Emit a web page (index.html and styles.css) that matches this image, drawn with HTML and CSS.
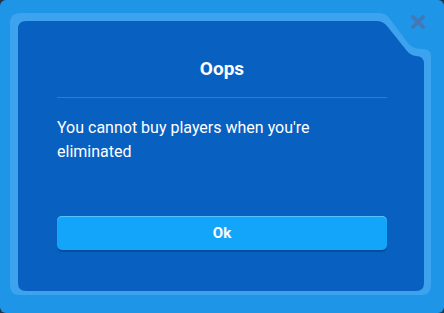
FILE: index.html
```html
<!DOCTYPE html>
<html>
<head>
<meta charset="utf-8">
<link rel="stylesheet" href="styles.css">
</head>
<body>
<div class="frame">
  <div class="ring">
    <div class="panel">
      <h1 class="title">Oops</h1>
      <div class="sep"></div>
      <p class="msg">You cannot buy players when you're eliminated</p>
      <button class="ok">Ok</button>
    </div>
  </div>
  <button class="close" aria-label="Close">
    <svg width="16" height="16" viewBox="0 0 16 16"><path d="M3 3 L13 13 M13 3 L3 13" stroke="#4577b4" stroke-width="3.8" stroke-linecap="round"/></svg>
  </button>
</div>
</body>
</html>
```

FILE: styles.css
```css
html, body {
  margin: 0;
  padding: 0;
  background: #22364a;
}
body {
  font-family: Roboto, "Liberation Sans", sans-serif;
}
.frame {
  position: relative;
  width: 444px;
  height: 313px;
  box-sizing: border-box;
  padding: 13px 13px 18px 10px;
  background: #1e95e7;
  border-radius: 6px;
}
.ring {
  width: 421px;
  height: 282px;
  box-sizing: border-box;
  padding: 8px 7px 4px 8px;
  background: #3ea3ee;
  clip-path: path("M 10 0 L 369 0 Q 376 0 380 6 L 397 29 Q 402 36 411 36 L 413 36 Q 421 36 421 44 L 421 272 Q 421 282 411 282 L 10 282 Q 0 282 0 272 L 0 10 Q 0 0 10 0 Z");
}
.panel {
  width: 406px;
  height: 270px;
  box-sizing: border-box;
  padding: 36px 37px 0 39px;
  background: #0860c0;
  clip-path: path("M 8 0 L 358 0 Q 365 0 369 5 L 389 30 Q 393 35 399 35 L 398 35 Q 406 35 406 43 L 406 262 Q 406 270 398 270 L 8 270 Q 0 270 0 262 L 0 8 Q 0 0 8 0 Z");
  display: flex;
  flex-direction: column;
}
.title {
  margin: 0;
  font-size: 19px;
  line-height: 24px;
  font-weight: 700;
  color: #ffffff;
  text-align: center;
}
.sep {
  height: 1px;
  margin-top: 16px;
  background: #2b7cd2;
}
.msg {
  margin: 18px 0 0;
  font-size: 16px;
  line-height: 24px;
  color: #ffffff;
}
.ok {
  margin-top: 52px;
  height: 34px;
  border: none;
  border-radius: 5px;
  background: #12a5fa;
  box-shadow: inset 0 1px 0 #55c2ff, 0 2px 0 #0a4c9c;
  color: #ffffff;
  font-family: Roboto, "Liberation Sans", sans-serif;
  font-size: 15px;
  font-weight: 700;
  padding: 0;
}
.close {
  position: absolute;
  left: 410px;
  top: 14px;
  width: 16px;
  height: 16px;
  padding: 0;
  border: none;
  background: none;
  display: flex;
}
```
